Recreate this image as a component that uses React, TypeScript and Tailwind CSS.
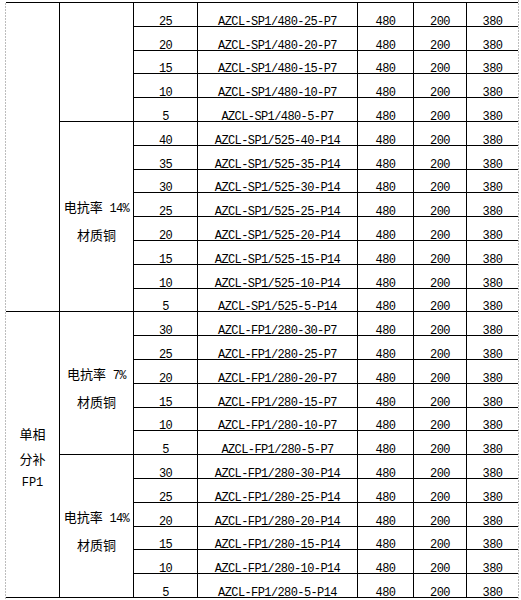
import React from "react";

const cell = "border-r border-b border-black flex items-end justify-center leading-[8px] text-[12px] tracking-[-0.6px]";
const lastCell = "border-b border-black flex items-end justify-center leading-[8px] text-[12px] tracking-[-0.6px]";

type Row = { kvar: number; model: string };

const groups: { pct: string | null; rows: Row[] }[] = [
  { pct: null, rows: [25, 20, 15, 10, 5].map((k) => ({ kvar: k, model: `AZCL-SP1/480-${k}-P7` })) },
  { pct: "14%", rows: [40, 35, 30, 25, 20, 15, 10, 5].map((k) => ({ kvar: k, model: `AZCL-SP1/525-${k}-P14` })) },
  { pct: "7%", rows: [30, 25, 20, 15, 10, 5].map((k) => ({ kvar: k, model: `AZCL-FP1/280-${k}-P7` })) },
  { pct: "14%", rows: [30, 25, 20, 15, 10, 5].map((k) => ({ kvar: k, model: `AZCL-FP1/280-${k}-P14` })) },
];

const cjk = "[font-family:'Noto_Sans_CJK_SC','Noto_Sans_CJK_JP',sans-serif] text-[13px] tracking-normal";
const mono = "[font-family:'Liberation_Mono',monospace] text-[12px] tracking-[-0.6px]";

function Reactance({ pct, span }: { pct: string; span: string }) {
  return (
    <div className={`border-r border-b border-black flex flex-col items-center justify-center pt-[8px] leading-[25px] ${span}`}>
      <div className="whitespace-pre">
        <span className={cjk}>电抗率</span>
        <span className={mono}>{" " + pct}</span>
      </div>
      <div className={cjk}>材质铜</div>
    </div>
  );
}

export default function App() {
  const cells: React.ReactNode[] = [];
  let key = 0;
  groups.forEach((g, gi) => {
    g.rows.forEach((r, ri) => {
      if (ri === 0) {
        if (gi === 0) {
          cells.push(<div key={key++} className="border-r border-b border-black row-span-13" />);
        }
        if (gi === 2) {
          cells.push(
            <div
              key={key++}
              className="border-r border-b border-black flex flex-col items-center justify-center pt-[7px] leading-[25px] row-span-12"
            >
              <div className={cjk}>单相</div>
              <div className={cjk}>分补</div>
              <div className="[font-family:'Liberation_Mono',monospace] text-[12px]">FP1</div>
            </div>
          );
        }
        if (gi === 0) {
          cells.push(<div key={key++} className="border-r border-b border-black row-span-5" />);
        } else if (gi === 1) {
          cells.push(<Reactance key={key++} pct="14%" span="row-span-8" />);
        } else {
          cells.push(<Reactance key={key++} pct={g.pct!} span="row-span-6" />);
        }
      }
      cells.push(<div key={key++} className={cell}>{r.kvar}</div>);
      cells.push(<div key={key++} className={cell}>{r.model}</div>);
      cells.push(<div key={key++} className={cell}>480</div>);
      cells.push(<div key={key++} className={cell}>200</div>);
      cells.push(<div key={key++} className={lastCell}>380</div>);
    });
  });

  return (
    <div className="w-[521px] h-[600px] bg-white text-black [font-family:'Liberation_Mono',monospace] flex pl-[5px] overflow-hidden">
      <div className="w-px mt-[3px] self-stretch bg-[repeating-linear-gradient(to_bottom,#bdbdbd_0px,#bdbdbd_2px,transparent_2px,transparent_3px)]" />
      <div className="mt-[2px] self-start grid grid-cols-[54px_74px_64px_160px_56px_53px_51px] grid-rows-[repeat(25,23.8px)] border-t border-black">
        {cells}
      </div>
      <div className="w-px self-stretch bg-[repeating-linear-gradient(to_bottom,#bdbdbd_0px,#bdbdbd_2px,transparent_2px,transparent_3px)]" />
    </div>
  );
}
